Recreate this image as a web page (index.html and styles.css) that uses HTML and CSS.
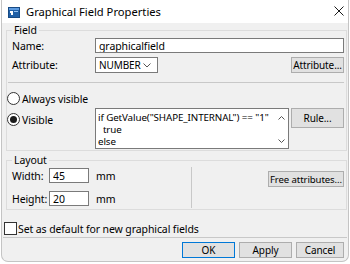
FILE: index.html
```
<!doctype html>
<html>
 <head>
  <link rel="stylesheet" href="styles.css">
 </head>
 <body>
  <div class="window">
   <div class="titlebar">
    <svg class="app-icon" width="12" height="11" viewBox="0 0 12 11">
     <rect x="0.5" y="0.5" width="11" height="10" fill="#1f5fa6" stroke="#174a84"/>
     <rect x="1" y="1" width="10" height="2" fill="#5d9be0"/>
     <rect x="2" y="4" width="3" height="2" fill="#ffffff"/>
     <rect x="3" y="6" width="2" height="2" fill="#ffffff"/>
     <rect x="6" y="4" width="4" height="1" fill="#9cc4f0"/>
    </svg>
    <span class="title">Graphical Field Properties</span>
    <svg class="close" width="10" height="10" viewBox="0 0 10 10">
     <path d="M0.5 0.5 L9.5 9.5 M9.5 0.5 L0.5 9.5" stroke="#1a1a1a" stroke-width="1" fill="none"/>
    </svg>
   </div>
   <div class="client">
    <fieldset class="group group-field">
     <legend>Field</legend>
     <div class="row">
      <label class="label" for="name">Name:</label>
      <input class="input input-name" id="name" type="text" value="graphicalfield">
     </div>
     <div class="row row-attr">
      <span class="label">Attribute:</span>
      <div class="combo">
       <span>NUMBER</span>
       <svg width="8" height="5" viewBox="0 0 8 5"><path d="M0.5 0.5 L4 4 L7.5 0.5" stroke="#555" fill="none"/></svg>
      </div>
      <button class="btn btn-attr">Attribute...</button>
     </div>
     <div class="sep"></div>
     <div class="vis">
      <div class="choices">
       <div class="choice"><span class="radio"></span>Always visible</div>
       <div class="choice choice-2"><span class="radio on"></span>Visible</div>
      </div>
      <div class="rule-box">
       <div class="rule-text">if GetValue("SHAPE_INTERNAL") == "1"
  true
else</div>
       <div class="scroll">
        <svg width="7" height="4" viewBox="0 0 7 4"><path d="M0.5 3.5 L3.5 0.5 L6.5 3.5" stroke="#555" fill="none"/></svg>
        <svg width="7" height="4" viewBox="0 0 7 4"><path d="M0.5 0.5 L3.5 3.5 L6.5 0.5" stroke="#555" fill="none"/></svg>
       </div>
      </div>
      <button class="btn btn-rule">Rule...</button>
     </div>
    </fieldset>

    <fieldset class="group group-layout">
     <legend>Layout</legend>
     <div class="layout">
      <div class="sizes">
       <div class="row row-size">
        <span class="label label-short">Width:</span>
        <input class="input input-size" type="text" value="45">
        <span class="unit">mm</span>
       </div>
       <div class="row row-size row-size-2">
        <span class="label label-short">Height:</span>
        <input class="input input-size" type="text" value="20">
        <span class="unit">mm</span>
       </div>
      </div>
      <div class="vsep"></div>
      <div class="free">
       <button class="btn btn-free">Free attributes...</button>
      </div>
     </div>
    </fieldset>

    <div class="check-row">
     <span class="check"></span>Set as default for new graphical fields
    </div>
    <div class="sep sep-bottom"></div>
    <div class="buttons">
     <button class="btn btn-ok">OK</button>
     <button class="btn btn-apply">Apply</button>
     <button class="btn btn-cancel">Cancel</button>
    </div>
   </div>
  </div>
 </body>
</html>
```
FILE: styles.css
```
body {
    margin: 0;
    background: #fff;
    font-family: "Noto Sans", sans-serif;
    font-size: 10.5px;
    letter-spacing: -0.1px;
    color: #000;
}
.window {
    width: 348px;
    height: 262px;
    margin-left: 1px;
    box-sizing: border-box;
    border: 1px solid #c4c4c4;
    border-top: none;
    border-radius: 0 0 7px 7px;
    background: #f0f0f0;
    overflow: hidden;
    display: flex;
    flex-direction: column;
}

/* barra de titulo */
.titlebar {
    height: 23px;
    flex: none;
    background: #fff;
    display: flex;
    align-items: center;
    padding-left: 6px;
}
.app-icon {
    margin-top: 1px;
}
.title {
    margin-left: 6px;
    font-size: 11.2px;
    letter-spacing: 0;
}
.close {
    margin-left: auto;
    margin-right: 4px;
    margin-top: -1px;
}

.client {
    flex: 1;
    padding: 0 1px 0 4px;
    display: flex;
    flex-direction: column;
}

/* grupos */
.group {
    margin: 0;
    min-width: 0;
    border: 1px solid #dcdcdc;
    padding: 1px 2px 1px 5px;
}
.group legend {
    padding: 0 2px;
    margin-left: 0;
    line-height: 14px;
}
.group-layout {
    margin-top: 2px;
    padding-bottom: 3px;
}

.row {
    display: flex;
    align-items: center;
}
.label {
    width: 83px;
    flex: none;
}
.input {
    box-sizing: border-box;
    height: 15px;
    margin: 0;
    padding: 0 3px;
    border: 1px solid #7a7a7a;
    border-radius: 0;
    background: #fff;
    font: inherit;
    line-height: 13px;
    letter-spacing: inherit;
    color: #000;
    outline: none;
}
.input-name {
    flex: 1;
    min-width: 0;
}
.row-attr {
    margin-top: 4px;
}
.combo {
    box-sizing: border-box;
    width: 63px;
    height: 16px;
    border: 1px solid #7a7a7a;
    background: #fff;
    display: flex;
    align-items: center;
    justify-content: space-between;
    padding: 0 6px 0 3px;
    font-size: 10px;
}
.combo svg {
    margin-top: 1px;
}

.btn {
    box-sizing: border-box;
    height: 16px;
    margin: 0;
    padding: 0;
    border: 1px solid #adadad;
    border-radius: 0;
    background: #e1e1e1;
    font: inherit;
    font-size: 10px;
    letter-spacing: inherit;
    color: #000;
    white-space: nowrap;
}
.btn-attr {
    margin-left: auto;
    width: 53px;
}

.sep {
    height: 0;
    border-top: 1px solid #c8c8c8;
    margin: 9px 0 0 -4px;
}

/* visibilidad */
.vis {
    display: flex;
    align-items: flex-start;
    margin-top: 9px;
}
.choices {
    width: 88px;
    flex: none;
    margin-left: -5px;
}
.choice {
    display: flex;
    align-items: center;
    height: 13px;
}
.choice-2 {
    margin-top: 8px;
}
.radio {
    box-sizing: border-box;
    width: 13px;
    height: 13px;
    border: 1px solid #333;
    border-radius: 50%;
    background: #fff;
    margin-right: 2px;
    display: flex;
    align-items: center;
    justify-content: center;
}
.radio.on::after {
    content: "";
    width: 7px;
    height: 7px;
    border-radius: 50%;
    background: #1a1a1a;
}
.rule-box {
    box-sizing: border-box;
    width: 194px;
    height: 41px;
    margin-top: 16px;
    border: 1px solid #7a7a7a;
    background: #fff;
    display: flex;
}
.rule-text {
    flex: 1;
    white-space: pre;
    overflow: hidden;
    font-size: 9.8px;
    line-height: 12px;
    padding: 3px 0 0 2px;
}
.scroll {
    width: 14px;
    flex: none;
    display: flex;
    flex-direction: column;
    align-items: center;
    justify-content: space-between;
    padding: 7px 0 5px;
}
.btn-rule {
    margin-left: 2px;
    width: 53px;
    height: 20px;
    margin-top: 16px;
}

/* layout */
.layout {
    display: flex;
}
.sizes {
    width: 179px;
    flex: none;
}
.row-size {
    height: 15px;
}
.row-size-2 {
    margin-top: 8px;
}
.label-short {
    width: 37px;
}
.input-size {
    width: 40px;
}
.unit {
    margin-left: 7px;
}
.vsep {
    border-left: 1px solid #c8c8c8;
    margin: -1px 0 -2px;
}
.free {
    flex: 1;
    display: flex;
    justify-content: flex-end;
    align-items: flex-start;
    padding-top: 3px;
}
.btn-free {
    width: 76px;
    font-size: 9.6px;
}

/* pie */
.check-row {
    display: flex;
    align-items: center;
    height: 13px;
    margin: 12px 0 0 -2px;
}
.check {
    box-sizing: border-box;
    width: 13px;
    height: 13px;
    border: 1px solid #333;
    background: #fff;
    margin-right: 1px;
}
.sep-bottom {
    margin: 2px 0 0 -3px;
}
.buttons {
    display: flex;
    justify-content: flex-end;
    gap: 4px;
    margin: 4px 3px 0 0;
}
.btn-ok {
    width: 53px;
    border-color: #0078d7;
}
.btn-apply {
    width: 53px;
}
.btn-cancel {
    width: 48px;
}
```
